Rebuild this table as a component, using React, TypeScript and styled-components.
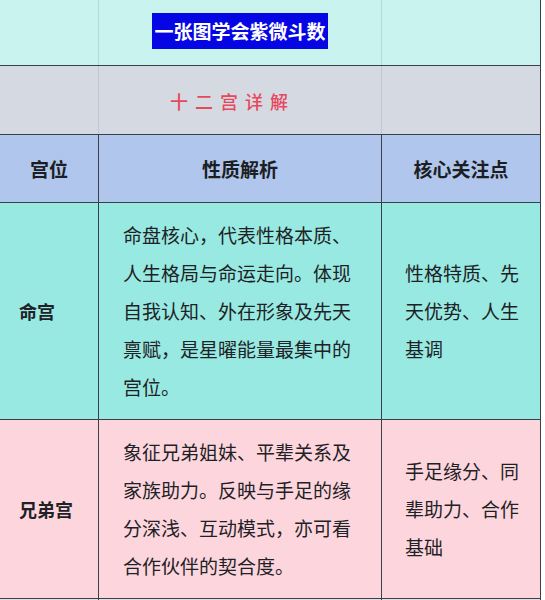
import React from 'react'
import styled, { createGlobalStyle } from 'styled-components'

const Global = createGlobalStyle`
  html, body {
    margin: 0;
    padding: 0;
    background: #ffffff;
    overflow: hidden;
  }
  body {
    font-family: "Noto Sans CJK SC", "Noto Sans", sans-serif;
    color: #1e2226;
  }
`

const Table = styled.div`
  width: 541px;
  border-right: 1px solid #3a4047;
  box-sizing: border-box;
`

const Row = styled.div<{ $bg: string }>`
  display: grid;
  grid-template-columns: 99px 283px 158px;
  background: ${(p) => p.$bg};
  border-bottom: 1px solid #3a4047;
`

const Cell = styled.div<{ $faint?: boolean; $last?: boolean; $align?: 'center' | 'left' }>`
  box-sizing: border-box;
  display: flex;
  align-items: center;
  justify-content: ${(p) => (p.$align === 'left' ? 'flex-start' : 'center')};
  border-right: ${(p) => (p.$last ? 'none' : p.$faint ? '1px solid rgba(90, 110, 120, 0.18)' : '1px solid #3a4047')};
`

const BannerRow = styled(Row)`
  height: 65px;
`

const SubRow = styled(Row)`
  height: 68px;
`

const HeadRow = styled(Row)`
  height: 67px;
`

const NextRow = styled(Row)`
  height: 40px;
`

const Banner = styled.span`
  display: inline-block;
  background: #0606e4;
  color: #ffffff;
  font-size: 19px;
  font-weight: 700;
  line-height: 36px;
  height: 36px;
  padding: 0 2px;
  margin-top: -3px;
  white-space: nowrap;
`

const SubTitle = styled.span`
  color: #e8485d;
  font-size: 18px;
  font-weight: 500;
  letter-spacing: 7px;
  padding-right: 15px;
  margin-top: 2px;
`

const HeadText = styled.span`
  font-size: 19px;
  font-weight: 700;
  color: #1b1f23;
`

const Label = styled.span`
  font-size: 18px;
  font-weight: 700;
  padding-left: 19px;
`

const Body = styled.p`
  margin: 0;
  padding: 13px 24px;
  font-size: 19px;
  line-height: 38px;
  width: 100%;
  box-sizing: border-box;
`

const Focus = styled.p`
  margin: 0;
  padding: 13px 17px 13px 23px;
  font-size: 19px;
  line-height: 38px;
  width: 100%;
  box-sizing: border-box;
`

type Palace = {
  name: string
  desc: string
  focus: string
  bg: string
}

const palaces: Palace[] = [
  {
    name: '命宫',
    desc: '命盘核心，代表性格本质、人生格局与命运走向。体现自我认知、外在形象及先天禀赋，是星曜能量最集中的宫位。',
    focus: '性格特质、先天优势、人生基调',
    bg: '#98e9e1',
  },
  {
    name: '兄弟宫',
    desc: '象征兄弟姐妹、平辈关系及家族助力。反映与手足的缘分深浅、互动模式，亦可看合作伙伴的契合度。',
    focus: '手足缘分、同辈助力、合作基础',
    bg: '#fdd6dd',
  },
]

const App = () => {
  return (
    <>
      <Global />
      <Table>
        <BannerRow $bg="#c9f3ef">
          <Cell $faint />
          <Cell $faint>
            <Banner>一张图学会紫微斗数</Banner>
          </Cell>
          <Cell $last />
        </BannerRow>
        <SubRow $bg="#d5dae2">
          <Cell $faint />
          <Cell $faint>
            <SubTitle>十二宫详解</SubTitle>
          </Cell>
          <Cell $last />
        </SubRow>
        <HeadRow $bg="#b1c6ec">
          <Cell>
            <HeadText>宫位</HeadText>
          </Cell>
          <Cell>
            <HeadText>性质解析</HeadText>
          </Cell>
          <Cell $last>
            <HeadText>核心关注点</HeadText>
          </Cell>
        </HeadRow>
        {palaces.map((p) => (
          <Row key={p.name} $bg={p.bg}>
            <Cell $align="left">
              <Label>{p.name}</Label>
            </Cell>
            <Cell>
              <Body>{p.desc}</Body>
            </Cell>
            <Cell $last>
              <Focus>{p.focus}</Focus>
            </Cell>
          </Row>
        ))}
        <NextRow $bg="#dfdfe4">
          <Cell />
          <Cell />
          <Cell $last />
        </NextRow>
      </Table>
    </>
  )
}

export default App
